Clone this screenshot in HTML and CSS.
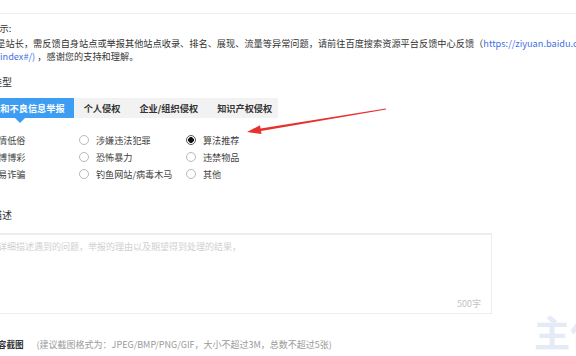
FILE: index.html
```html
<!DOCTYPE html>
<html lang="zh-CN">
<head>
<meta charset="utf-8">
<title>举报</title>
<link rel="stylesheet" href="styles.css">
</head>
<body>
<div class="page">
  <div class="topbar"></div>
  <div class="tips">
    <div class="tips-title">温馨提示:</div>
    <p class="tips-text">若您是站长，需反馈自身站点或举报其他站点收录、排名、展现、流量等异常问题，请前往百度搜索资源平台反馈中心反馈（<a class="link">https://ziyuan.baidu.com/feedback/</a><br><a class="link">index#/)</a> ，感谢您的支持和理解。</p>
  </div>

  <div class="heading">举报类型</div>

  <div class="tabs">
    <div class="tab active">违法和不良信息举报</div>
    <div class="tab">个人侵权</div>
    <div class="tab">企业/组织侵权</div>
    <div class="tab">知识产权侵权</div>
  </div>

  <div class="radios">
    <label class="radio"><span class="dot"></span>色情低俗</label>
    <label class="radio"><span class="dot"></span>涉嫌违法犯罪</label>
    <label class="radio"><span class="dot checked"></span>算法推荐</label>
    <label class="radio"><span class="dot"></span>赌博博彩</label>
    <label class="radio"><span class="dot"></span>恐怖暴力</label>
    <label class="radio"><span class="dot"></span>违禁物品</label>
    <label class="radio"><span class="dot"></span>交易诈骗</label>
    <label class="radio"><span class="dot"></span>钓鱼网站/病毒木马</label>
    <label class="radio"><span class="dot"></span>其他</label>
  </div>

  <div class="heading desc-heading">问题描述</div>

  <div class="textarea">
    <div class="placeholder">请详细描述遇到的问题，举报的理由以及期望得到处理的结果，</div>
    <div class="counter">500字</div>
  </div>

  <div class="upload">
    <span class="upload-label">上传内容截图</span>
    <span class="upload-hint">(建议截图格式为：JPEG/BMP/PNG/GIF，大小不超过3M，总数不超过5张)</span>
  </div>
</div>

<div class="watermark">主任</div>

<svg class="arrow" width="576" height="356" viewBox="0 0 576 356">
  <polygon fill="#e8302c" points="247,132 261.5,134 261,131 386,109.4 386,108.6 260.6,128.4 260,125.3"/>
</svg>
</body>
</html>
```

FILE: styles.css
```css
html, body {
  margin: 0;
  padding: 0;
  width: 576px;
  height: 356px;
  overflow: hidden;
  background: #ffffff;
}

body {
  position: relative;
  font-family: "Noto Sans CJK SC", "Noto Sans", sans-serif;
  color: #333333;
}

.page {
  margin-left: -28px;
  width: 900px;
}

.topbar {
  height: 13px;
  border-bottom: 1px solid #efefef;
}

.tips {
  margin-top: 8px;
  font-size: 9.2px;
  line-height: 13px;
  color: #333333;
}

.tips-title {
  height: 13px;
}

.tips-text {
  margin: 2px 0 0 0;
  padding-left: 28px;
  text-indent: -22px;
  white-space: nowrap;
}

.link {
  color: #3f6fe6;
}

.heading {
  margin-top: 12px;
  font-size: 10px;
  line-height: 14px;
  color: #333333;
}

.tabs {
  display: flex;
  margin-top: 9px;
  height: 20px;
  background: #f2f2f2;
  width: 306px;
}

.tab {
  position: relative;
  padding: 0 9px 0 10px;
  font-size: 9.2px;
  line-height: 20px;
  font-weight: bold;
  color: #333333;
  white-space: nowrap;
}

.tab.active {
  background: #3d9df3;
  color: #ffffff;
}

.tab.active::after {
  content: "";
  position: absolute;
  left: 43px;
  top: 20px;
  border-left: 5px solid transparent;
  border-right: 5px solid transparent;
  border-top: 5px solid #3d9df3;
}

.radios {
  display: grid;
  grid-template-columns: 107px 107px 107px;
  grid-auto-rows: 17px;
  margin-top: 13px;
}

.radio {
  display: flex;
  align-items: center;
  gap: 7px;
  font-size: 9.1px;
  color: #3f3f3f;
  white-space: nowrap;
}

.dot {
  box-sizing: border-box;
  width: 10px;
  height: 10px;
  border: 1px solid #b9b9b9;
  border-radius: 50%;
  background: #ffffff;
  flex: none;
}

.dot.checked {
  border: 1px solid #555555;
  background: radial-gradient(circle, #111111 0, #111111 2.6px, #ffffff 3.1px);
}

.desc-heading {
  margin-top: 26px;
}

.textarea {
  box-sizing: border-box;
  display: flex;
  flex-direction: column;
  margin-top: 11px;
  width: 520px;
  height: 81px;
  border: 1px solid #ededed;
  border-top-width: 2px;
  padding: 5px 10px 3px 16px;
}

.placeholder {
  font-size: 9px;
  line-height: 13px;
  color: #d0d0d0;
  white-space: nowrap;
}

.counter {
  margin-top: auto;
  align-self: flex-end;
  font-size: 9px;
  line-height: 13px;
  color: #c4c4c4;
}

.upload {
  display: flex;
  align-items: center;
  gap: 13px;
  margin-top: 24px;
  line-height: 13px;
  white-space: nowrap;
}

.upload-label {
  font-size: 8.6px;
  font-weight: bold;
  color: #333333;
}

.upload-hint {
  font-size: 9px;
  color: #9a9a9a;
}

.watermark {
  position: absolute;
  left: 534px;
  top: 311px;
  font-size: 36px;
  line-height: 40px;
  font-weight: bold;
  color: #e5ebf6;
  white-space: nowrap;
}

.arrow {
  position: absolute;
  left: 0;
  top: 0;
  pointer-events: none;
}
```
